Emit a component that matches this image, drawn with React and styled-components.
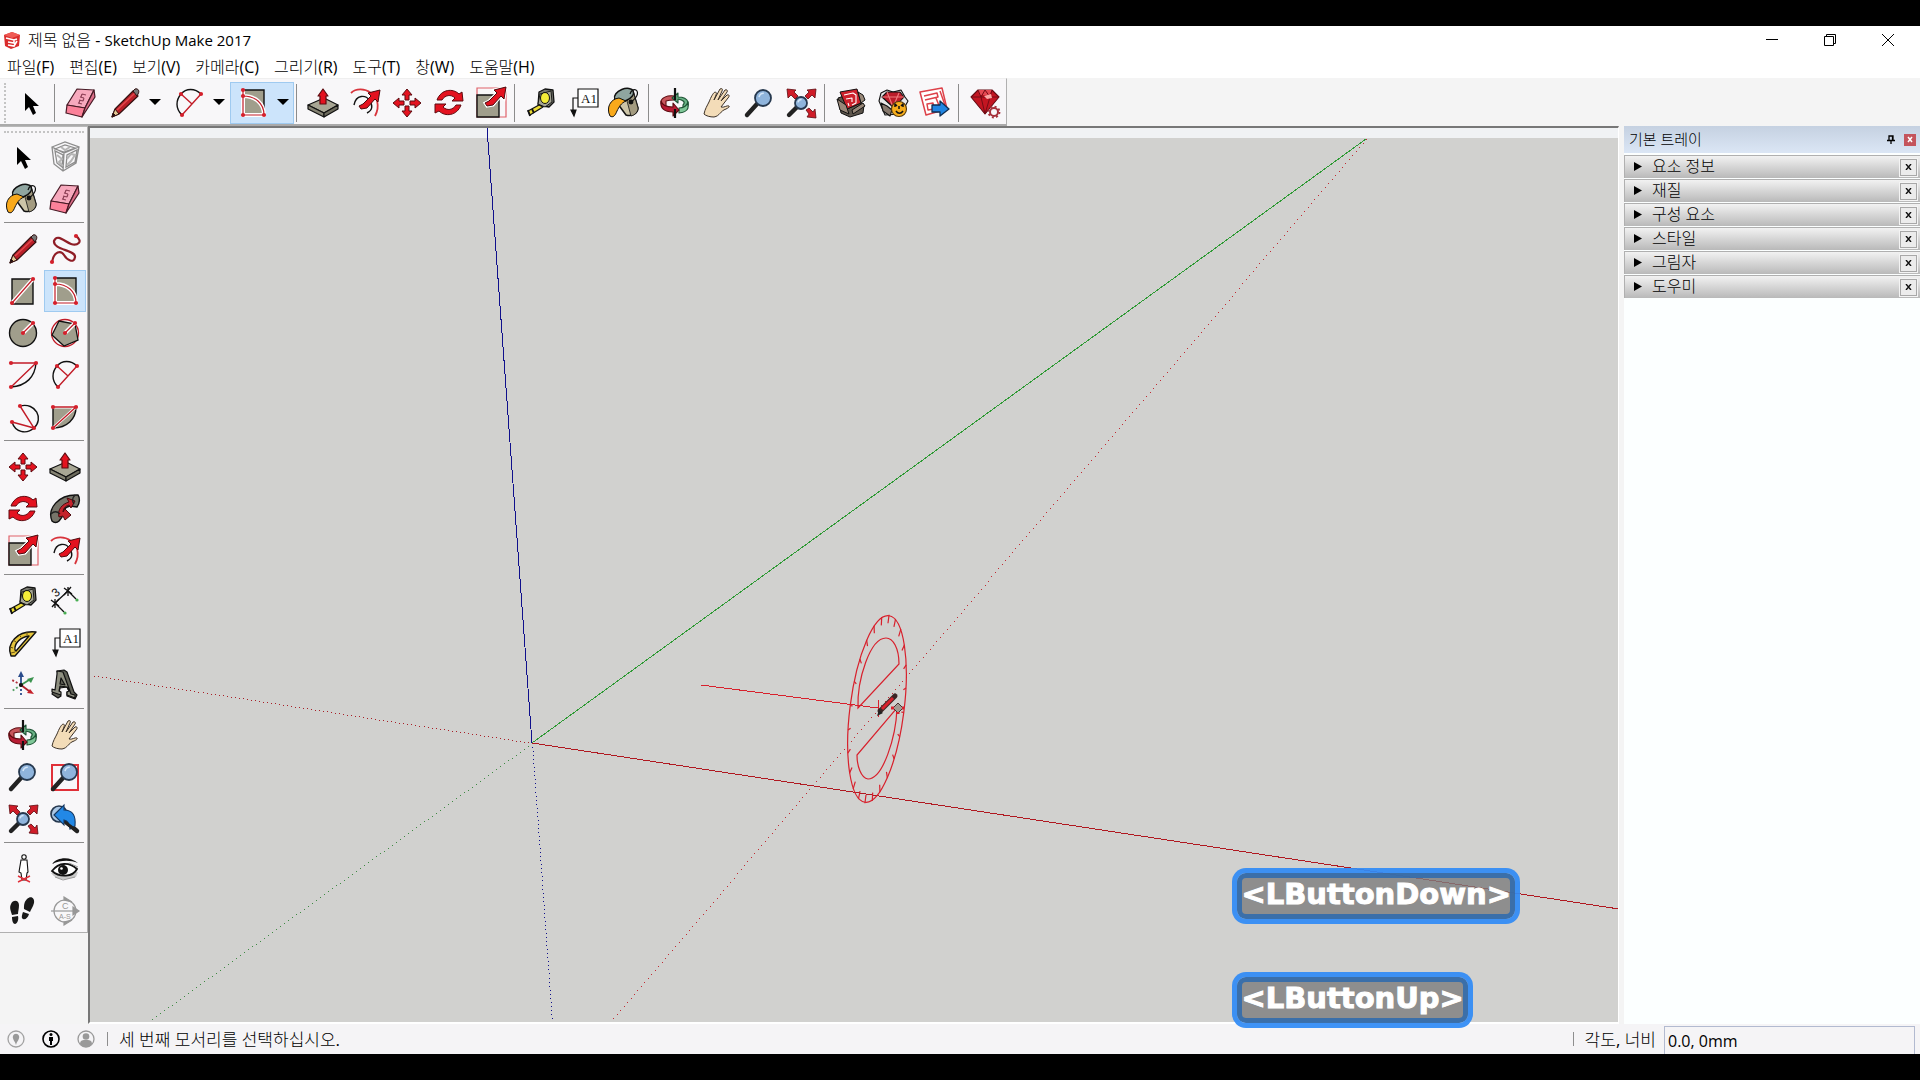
import React, { useState } from "react";
import styled, { createGlobalStyle } from "styled-components";

const GlobalStyle = createGlobalStyle`
  * {
    box-sizing: border-box;
  }

  body {
    margin: 0;
    background: #000;
  }
`;

const Screen = styled.div`
  display: flex;
  flex-direction: column;
  min-height: 100vh;
  padding: 26px 0;
  background: #000;
  color: #000;
  font-family: "Open Sans", "Noto Sans CJK KR Light", "Noto Sans CJK KR DemiLight", "Noto Sans CJK KR", sans-serif;
  font-size: 16px;

  button {
    border: 0;
    padding: 0;
    background: none;
    color: inherit;
    font: inherit;
  }
`;

const Window = styled.main`
  flex: 1;
  display: flex;
  flex-direction: column;
  background: #f4f4f4;
`;

const TitleBar = styled.header`
  display: flex;
  align-items: center;
  height: 28px;
  padding: 0 3px;
  background: #fff;

  h1 {
    flex: 1;
    margin: 0 0 0 7px;
    font-size: 16px;
    font-weight: 400;
    line-height: 28px;
  }

  h1 span {
    font-size: 15px;
  }
`;

const WindowButton = styled.button`
  width: 58px;
  height: 28px;

  svg {
    display: block;
    margin: auto;
  }
`;

const MenuBar = styled.nav`
  display: flex;
  gap: 1px;
  height: 24px;
  background: #fff;

  && button {
    padding: 2px 7px 0;
    font-size: 16px;
    line-height: 22px;
    white-space: nowrap;
  }
`;

const TopBar = styled.div`
  display: flex;
  height: 48px;
`;

const TopTools = styled.div`
  display: flex;
  align-items: center;
  padding: 2px 0 0 4px;
  background: #f8f7f9;
  border-top: 1px solid #efefef;
  border-right: 1px solid #b0b0b0;
  border-bottom: 2px solid #aaa;
`;

const Grip = styled.div`
  ${(p) =>
    p.$row
      ? "height: 5px; margin: 0 2px; border-top: 2px dotted #c4c4c4;"
      : "width: 6px; height: 40px; border-left: 2px dotted #c4c4c4;"}
`;

const Tool = styled.button`
  display: flex;
  align-items: center;
  justify-content: center;
  width: 42px;
  height: 42px;

  && {
    background: ${(p) => (p.$active ? "#cce4fb" : "none")};
    box-shadow: ${(p) => (p.$active ? "inset 0 0 0 1px #9fcaf0" : "none")};
  }
`;

const Split = styled.div`
  display: flex;
  height: 42px;
  background: ${(p) => (p.$active ? "#cce4fb" : "none")};
  box-shadow: ${(p) => (p.$active ? "inset 0 0 0 1px #9fcaf0" : "none")};

  ${Tool} {
    padding-left: 3px;
  }
`;

const Caret = styled.button`
  display: flex;
  align-items: center;
  justify-content: center;
  width: 22px;
  height: 40px;
`;

const Separator = styled.div`
  ${(p) =>
    p.$row
      ? "height: 1px; margin: 2px 0 5px 2px; width: 80px;"
      : "width: 1px; height: 38px; margin: 0 5px 0 2px;"}
  background: #8c8c8c;
`;

const Body = styled.div`
  flex: 1;
  display: flex;
`;

const SideBar = styled.aside`
  flex: none;
  width: 88px;
`;

const SideTools = styled.div`
  padding: 4px 1px 0 2px;
  background: #f8f7f9;
  border-top: 1px solid #b8b8b8;
  border-right: 1px solid #b0b0b0;
  border-bottom: 1px solid #b0b0b0;
`;

const ToolGrid = styled.div`
  display: grid;
  grid-template-columns: 42px 42px;
`;

const Viewport = styled.section`
  flex: 1;
  position: relative;
  min-width: 0;
  background: #d1d1cf;
  border-top: 2px solid #777;
  border-left: 2px solid #777;
  border-right: 1px solid #fff;
  border-bottom: 2px solid #fff;

  > svg {
    position: absolute;
    inset: 0;
    display: block;
    width: 100%;
    height: 100%;
  }
`;

const KeyOverlay = styled.div`
  position: absolute;
  right: 98px;
  bottom: -6px;
  display: flex;
  flex-direction: column;
  align-items: flex-start;
  gap: 48px;
`;

const KeyBadge = styled.kbd`
  height: 56px;
  padding: 0 4px;
  border: 5px solid rgba(48, 139, 245, 0.93);
  border-radius: 14px;
  background: rgba(125, 125, 125, 0.8);
  background-clip: padding-box;
  box-shadow: inset 0 0 0 5px rgba(50, 108, 172, 0.9);
  color: #fff;
  font-family: "DejaVu Sans", sans-serif;
  font-size: 29px;
  font-weight: 700;
  line-height: 43px;
  -webkit-text-stroke: 1px #fff;
`;

const Tray = styled.aside`
  flex: none;
  width: 296px;
  margin-left: 5px;
  background: #fcffff;
`;

const TrayHeader = styled.div`
  display: flex;
  align-items: center;
  height: 27px;
  margin-bottom: 2px;
  padding: 0 4px 0 5px;
  background: linear-gradient(#c5d1e1, #dbe6f5);

  h2 {
    flex: 1;
    margin: 0;
    padding-bottom: 2px;
    font-size: 15px;
    font-weight: 400;
    line-height: 24px;
  }
`;

const PinButton = styled.button`
  width: 18px;
  height: 18px;
  margin-right: 4px;

  svg {
    display: block;
    margin: auto;
  }
`;

const TrayClose = styled.button`
  width: 12px;
  height: 12px;

  svg {
    display: block;
  }
`;

const Panel = styled.div`
  display: flex;
  align-items: center;
  height: 23px;
  margin-bottom: 1px;
  padding-right: 3px;
  border-top: 1px solid #b0b0b0;
  border-left: 1px solid #b0b0b0;
  background: linear-gradient(#f2f2f2, #b9b9b9);
`;

const PanelTitle = styled.button`
  flex: 1;
  display: flex;
  align-items: center;
  gap: 10px;
  height: 22px;

  && {
    padding: 0 0 2px 9px;
    font-size: 16px;
    line-height: 20px;
  }
`;

const PanelClose = styled.button`
  display: flex;
  align-items: center;
  justify-content: center;
  width: 17px;
  height: 17px;

  && {
    border: 1px solid #a8a8a8;
    background: #ececec;
    outline: 1px solid #f4f4f4;
  }
`;

const StatusBar = styled.footer`
  display: flex;
  align-items: center;
  height: 30px;
  padding: 0 5px 0 7px;
  background: #f5f4f6;
  font-size: 17px;
  overflow: hidden;

  p {
    flex: 1;
    margin: 0;
    line-height: 28px;
    padding-top: 2px;
  }

  label {
    line-height: 28px;
    padding-top: 2px;
  }
`;

const StatusButton = styled.button`
  width: 18px;
  height: 18px;
  margin-right: 17px;

  svg {
    display: block;
  }
`;

const StatusRule = styled.div`
  width: 1px;
  height: 14px;
  margin: 0 11px 0 ${(p) => (p.$tight ? "0" : "-5px")};
  background: #8e8e8e;
`;

const ValueBox = styled.input`
  width: 251px;
  height: 28px;
  margin: 2px 0 0 8px;
  padding: 0 3px;
  border: 1px solid #b2bad0;
  border-bottom: 0;
  background: #f5f4f6;
  color: #000;
  font: inherit;
  font-size: 16px;
`;

const RED = "#e4121f";
const DARK = "#111";
const STONE = "#a09e8c";

const Dots = ({ at }) =>
  at.map(([x, y]) => (
    <circle key={x + "-" + y} cx={x} cy={y} r="2.1" fill="#d4202c" />
  ));

const Lens = ({ x = 20, y = 11, r = 8 }) => (
  <>
    <path d={`M${x - r * 0.7} ${y + r * 0.7}L4 28`} stroke="#222" strokeWidth="4.4" strokeLinecap="round" />
    <circle cx={x} cy={y} r={r} fill="#8fb4dc" stroke="#26384e" strokeWidth="1.8" />
    <path d={`M${x - r * 0.5} ${y - r * 0.1}a${r * 0.6} ${r * 0.6} 0 0 1 ${r * 0.6}-${r * 0.5}`} stroke="#d4e6f8" strokeWidth="1.5" fill="none" />
  </>
);

const BigArrow = () => (
  <path d="M14 14l8-8-3-3 12-3-2 12-3-3-8 9-6 1-2-3z" fill={RED} stroke="#4b0a0e" />
);

const icons = {
  select: <path d="M10 6v18l4-4 4 8 3-2-3-7h6z" fill="#000" />,
  component: (
    <g fill="none" stroke="#8d8d8d" strokeWidth="1.3">
      <path d="M3 6l13-5 14 5-3 16-13 8-9-7zM3 6l12 6 15-6M15 12l-1 18M6 8l10-4 10 3-11 4zM6 10l2 12 5 4 1-12zM28 9l-2 12-9 5 1-12z" />
      <path d="M8 14l5 4-3 3 4 4M18 18l4-5 4 1-4 6-4 4M12 6l4 3 5-3" stroke="#b5b5b5" strokeWidth="2" />
    </g>
  ),
  bucket: (
    <g stroke={DARK} strokeWidth="1.5" strokeLinejoin="round">
      <path d="M6 11C8 3 19 0 24 4l5 17c0 5-6 9-12 7L6 13z" fill="#cdc5a8" />
      <path d="M24 4l5 17c0 4-3 7-7 8l-4-15z" fill="#a39b80" strokeWidth=".8" />
      <ellipse cx="15" cy="8" rx="10" ry="6" transform="rotate(-22 15 8)" fill="#8fa5a0" />
      <path d="M1 29c-4-8 0-17 9-18l7 3c-5 2-7 6-9 10-2 5-4 7-7 5z" fill="#f9a91b" strokeWidth="1" />
      <path d="M20 16c5-2 10-8 8-12-2-3-6-1-7 3" fill="none" strokeWidth="1.2" />
      <circle cx="22" cy="15" r="1.7" fill="#111" />
    </g>
  ),
  eraser: (
    <g stroke="#461a25" strokeWidth="1.2" strokeLinejoin="round">
      <path d="M12 2l17 1-9 18-18-3z" fill="#f7a9bd" />
      <path d="M2 18l18 3-3 9-16-4z" fill="#fb8199" />
      <path d="M29 3l1 7-13 20 3-9z" fill="#db6e88" />
      <path d="M13 16l4 1M14 13l4 1M15 10l4 1M17 7l4 1M14 16l1-3M18 14l1-3M16 10l1-3" stroke="#8d4056" />
    </g>
  ),
  pencil: (
    <g stroke="#311" strokeLinejoin="round">
      <path d="M3 30l3-8L24 4l5 5-19 18z" fill="#b81f28" strokeWidth="1.2" />
      <path d="M8 23L26 6" stroke="#e2484c" strokeWidth="1.5" />
      <path d="M24 4l2-2c3-1 5 2 3 5l-1 2z" fill="#777" />
      <path d="M3 30l3-8 4 5z" fill="#e4c894" />
      <path d="M3 30l1-4 2 2z" fill="#111" />
    </g>
  ),
  freehand: (
    <>
      <path d="M3 29c2-11 9-12 12-7s10 9 11 2S4 17 5 8C8 0 16 9 22 11s13-2 5-8" fill="none" stroke="#8f1d26" strokeWidth="2.2" />
      <Dots at={[[3, 29], [27, 3]]} />
    </>
  ),
  line: (
    <>
      <path d="M5 4h21v25H5z" fill={STONE} stroke={DARK} strokeWidth="1.4" />
      <path d="M5 28L26 4" stroke="#fff" strokeWidth="4" />
      <path d="M5 28L26 4" stroke="#c21c28" strokeWidth="1.2" />
      <Dots at={[[5, 28], [26, 4]]} />
    </>
  ),
  rotated: (
    <>
      <path d="M6 3h21v25H6z" fill={STONE} stroke={DARK} strokeWidth="1.4" />
      <g fill="none">
        <path d="M6 3v25h21c0-12-9-19-21-19" stroke="#fff" strokeWidth="4" />
        <path d="M6 3v25h21c0-12-9-19-21-19" stroke="#c21c28" strokeWidth="1.2" />
      </g>
      <Dots at={[[6, 3], [6, 9], [6, 28], [27, 28]]} />
    </>
  ),
  circle: (
    <>
      <circle cx="16" cy="16" r="13.5" fill={STONE} stroke={DARK} strokeWidth="1.4" />
      <path d="M16 16l10-10" stroke="#fff" strokeWidth="4" />
      <path d="M16 16l10-10" stroke="#c21c28" strokeWidth="1.2" />
      <Dots at={[[16, 16], [26, 6]]} />
    </>
  ),
  polygon: (
    <>
      <circle cx="16" cy="16" r="13.5" fill="none" stroke="#c21c28" strokeWidth="1.3" />
      <path d="M10 4l16 3 3 16-14 6L3 18z" fill={STONE} stroke={DARK} strokeWidth="1.3" />
      <path d="M16 16l10-10" stroke="#fff" strokeWidth="4" />
      <path d="M16 16l10-10" stroke="#c21c28" strokeWidth="1.2" />
      <Dots at={[[16, 16], [26, 6]]} />
    </>
  ),
  arc: (
    <g fill="none" strokeWidth="1.4">
      <path d="M29 4c-1 14-10 23-25 24" stroke={DARK} />
      <path d="M29 4H4M29 4L4 28" stroke="#c21c28" />
      <Dots at={[[4, 4], [29, 4], [4, 28]]} />
    </g>
  ),
  arc2: (
    <g fill="none" strokeWidth="1.4">
      <path d="M28 7C22 1 13 1 8 7s-6 14 1 21" stroke={DARK} />
      <path d="M28 7L9 28M8 7l11 10" stroke="#c21c28" />
      <Dots at={[[8, 7], [28, 7], [9, 28]]} />
    </g>
  ),
  arc3: (
    <g fill="none" strokeWidth="1.4">
      <path d="M13 5C29 1 37 18 27 27 19 34 8 31 5 21" stroke={DARK} />
      <path d="M13 5l14 22L5 21" stroke="#c21c28" />
      <Dots at={[[13, 5], [5, 21], [27, 27]]} />
    </g>
  ),
  pie: (
    <g strokeWidth="1.4">
      <path d="M4 6h23c0 12-9 21-23 21z" fill={STONE} stroke={DARK} />
      <path d="M4 6h23L4 27" fill="none" stroke="#fff" strokeWidth="3" />
      <path d="M4 6h23L4 27" fill="none" stroke="#c21c28" />
      <Dots at={[[4, 6], [27, 6], [4, 27]]} />
    </g>
  ),
  move: (
    <path
      d="M16 2l5 6h-3v5h-4V8h-3zM16 30l5-6h-3v-5h-4v5h-3zM2 16l6-5v3h5v4H8v3zM30 16l-6-5v3h-5v4h5v3z"
      fill={RED}
      stroke="#5d0b10"
      strokeWidth="1"
    />
  ),
  pushpull: (
    <g stroke={DARK} strokeWidth="1.2" strokeLinejoin="round">
      <path d="M1 18l16-7 14 7-14 8z" fill="#a8a694" />
      <path d="M1 18l16 8v4L1 22z" fill="#858373" />
      <path d="M31 18l-14 8v4l14-8z" fill="#6d6b5d" />
      <path d="M16 2l5 7h-2v8h-6V9h-2z" fill={RED} stroke="#5d0b10" />
    </g>
  ),
  rotate: (
    <g fill={RED} stroke="#5d0b10" strokeWidth="1" strokeLinejoin="round">
      <path d="M4 13C8 2 20 1 26 7l3-2 1 9H19l3-3c-4-4-10-3-13 2z" />
      <path d="M28 18c-4 11-16 12-22 6l-4 2 0-9h11l-3 3c4 4 10 3 13-2z" />
    </g>
  ),
  follow: (
    <g stroke={DARK} strokeWidth="1.4" strokeLinejoin="round">
      <path d="M3 28C-2 16 9 1 29 2c2 3 2 8-1 12l-7-1c-5 1-8 5-8 11l-3 4c-2 2-5 2-7 0z" fill="#77756a" />
      <path d="M10 24c-2-7 3-13 10-15l-2-4 8 3-4 7-2-3c-4 1-6 4-6 7l2-3 6 6-6 5-2-4z" fill="#c5222b" stroke="#4b0a0e" strokeWidth="1" />
      <path d="M26 2c-3 3-3 6-1 9M2 21c3-3 6-3 9 0" fill="none" stroke="#222" />
    </g>
  ),
  scale: (
    <>
      <path d="M2 1h29v29H2z" fill="none" stroke="#e0626a" strokeWidth="1.2" />
      <path d="M2 8h22v22H2z" fill={STONE} stroke={DARK} strokeWidth="1.4" />
      <path d="M14 14l8-8-3-3 12-3-2 12-3-3-8 9-6 1-2-3z" stroke="#fff" strokeWidth="3" />
      <BigArrow />
    </>
  ),
  offset: (
    <>
      <path d="M2 6C12-4 37 8 26 29" fill="none" stroke="#d8343c" strokeWidth="1.8" />
      <path d="M5 18C7 7 17 8 20 13c4 5 4 10-2 13" fill="none" stroke={DARK} strokeWidth="1.4" />
      <g transform="translate(0 3)">
        <BigArrow />
      </g>
    </>
  ),
  tape: (
    <g stroke={DARK} strokeWidth="1.3" strokeLinejoin="round">
      <path d="M14 5l6-3 8 1 1 12-5 5-11-2z" fill="#77786f" />
      <path d="M13 17l2-10 11-3 1 11-7 5z" fill="#a5a595" strokeWidth=".9" />
      <ellipse cx="20" cy="11" rx="4.5" ry="5.5" fill="#f4ec38" strokeWidth="1" />
      <path d="M14 18L3 24l2 4 13-8z" fill="#ecdc34" />
      <path d="M3 23l2 6M7 22l2 4" strokeWidth="1.8" />
    </g>
  ),
  dimension: (
    <g fill="none" stroke={DARK} strokeWidth="1.3">
      <path d="M6 18L19 6M6 18l9 9M19 6l8 8" />
      <path d="M2 15l8 6M6 14v9M15 3l8 6M19 2v9M3 22l7-8M15 10l7-8" />
      <circle cx="28" cy="15" r="1.6" fill="#48ae52" stroke="none" />
      <circle cx="16" cy="28" r="1.6" fill="#48ae52" stroke="none" />
      <text x="4" y="11" transform="rotate(-40 8 8)" fontFamily="Liberation Sans" fontSize="12" fill={DARK} stroke="none">3</text>
    </g>
  ),
  protractor: (
    <g stroke={DARK} strokeWidth="1.4" strokeLinejoin="round">
      <path d="M4 29C-1 17 10 3 29 5L8 29z" fill="#e5c53c" />
      <path d="M8 23c-1-7 6-13 14-14L9 24z" fill="#f8f7f9" />
      <path d="M3 20l3 1M6 13l3 2M12 8l2 2M20 5v3M4 26l4-1" stroke="#6a5210" strokeWidth="1" />
    </g>
  ),
  text: (
    <g stroke={DARK} strokeWidth="1.2">
      <path d="M11 2h20v18H11z" fill="#fff" />
      <path d="M11 11H6v13" fill="none" />
      <path d="M4 23h5l-2 6z" fill={DARK} />
      <text x="14" y="16" fontFamily="Liberation Serif" fontSize="13" fill={DARK} stroke="none">A1</text>
    </g>
  ),
  axes: (
    <g strokeWidth="1.8">
      <path d="M14 16v12" stroke="#2a4c8c" strokeDasharray="2 2" />
      <path d="M14 16L5 22" stroke="#53a063" strokeDasharray="2 2" />
      <path d="M14 16L5 11" stroke="#b0303a" strokeDasharray="2 2" />
      <path d="M14 16V7" stroke="#2a4c8c" />
      <path d="M14 16l8-5" stroke="#3c9450" />
      <path d="M14 16l8 6" stroke="#b0202a" />
      <path d="M14 2l3 6h-6z" fill="#2a4c8c" />
      <path d="M27 8l-3 6-4-4z" fill="#3c9450" />
      <path d="M27 25l-7-1 3-4z" fill="#c4202a" />
      <circle cx="14" cy="16" r="2" fill={DARK} />
    </g>
  ),
  text3d: (
    <g stroke={DARK} strokeWidth="1.2" strokeLinejoin="round">
      <path d="M8 2l7-1 3 2 7 20 3 3-2 4-8-3v-4l2-1-2-4-7 1-1 5 2 3-3 2-6-4 2-4 3 1 1-17z" fill="#5f6056" />
      <path d="M8 2l6 1 8 22 4 1v3l-8-3v-3l2-1-2-4-7-1-1 5 2 1v3l-9-3v-3l3 1 2-16zM12 9l-1 6 5 1z" fill="#8e8f80" />
    </g>
  ),
  orbit: (
    <g strokeLinejoin="round" strokeWidth="1.1">
      <path d="M15 9C8 8 2 11 2 15c0 3 2 4 5 5v-6c3-1 5-1 8-1z" fill="#c8565c" stroke="#5d0b10" />
      <path d="M19 6l-6 5 6 5v-4c5 1 8 3 5 6v5c4-1 6-4 5-8-1-3-5-5-10-5z" fill="#6ab386" stroke="#1c5233" />
      <path d="M29 15v6c-1 3-5 5-9 5v-5c5 0 8-3 9-6z" fill="#7fc798" stroke="#1c5233" />
      <path d="M2 14c1 4 6 6 12 6v-4l6 7-6 6v-4C5 25 1 21 2 14z" fill="#b81c34" stroke="#5d0b10" />
      <path d="M16 1v12M16 22v9" stroke={DARK} strokeWidth="2.2" />
    </g>
  ),
  pan: (
    <path
      d="M3 27c1-5 3-8 5-12 2-5 4-9 6-10 1 0 2 1 1 3l-2 5 6-11c2-1 3 0 2 2l-4 9 7-10c2-1 3 1 2 2l-6 9 6-6c2-1 3 1 1 3l-7 9c3 1 6-2 8-1 1 1-1 2-3 3-6 2-6 7-12 8-4 0-8-1-10-3z"
      fill="#f3dcb8"
      stroke="#3c3127"
      strokeWidth="1"
    />
  ),
  zoom: <Lens />,
  zoomWindow: (
    <>
      <path d="M3 4h26v25H3z" fill="none" stroke="#e03038" strokeWidth="2" />
      <Lens />
    </>
  ),
  extents: (
    <>
      <Lens x={16} y={16} r={6} />
      <g fill="#cf1c28" stroke="#5d0b10" strokeWidth=".8">
        <path d="M2 2l9 1-2 2 4 4-3 3-4-4-3 3zM31 2l-9 1 2 2-4 4 3 3 4-4 3 3zM31 31l-9-1 2-3-3-4 3-2 4 4 2-3z" />
      </g>
    </>
  ),
  previous: (
    <>
      <circle cx="10" cy="11" r="8" fill="#a9c6e4" stroke="#26384e" strokeWidth="1.7" />
      <path d="M16 18l12 10" stroke="#222" strokeWidth="4.4" strokeLinecap="round" />
      <path d="M5 12L15 2v5c9 0 12 6 11 16l-5 3c-1-6-2-8-6-9v5z" fill="#2288e6" stroke="#14365f" strokeWidth="1.1" />
      <path d="M17 20l11 8" stroke="#222" strokeWidth="3" strokeLinecap="round" />
    </>
  ),
  camera: (
    <g fill="#fff" stroke={DARK} strokeWidth="1.1">
      <circle cx="17" cy="4" r="2.2" />
      <path d="M14 7h6l1 12-1 1-1 7h-4l-1-7-2-1z" />
      <path d="M11 23l12 6M23 23l-12 6" stroke="#e0303a" strokeWidth="1.4" />
    </g>
  ),
  look: (
    <g>
      <path d="M2 20c6 8 16 7 25 4l2-5z" fill="#c9c9c9" />
      <path d="M3 18c7-9 17-9 25-2-4 8-17 9-25 2z" fill="#fff" stroke={DARK} strokeWidth="1.8" />
      <path d="M3 11c5-7 18-8 26-1-8-3-17-3-26 1z" fill={DARK} />
      <circle cx="14" cy="17" r="5" fill={DARK} />
      <circle cx="12.5" cy="15.5" r="1.3" fill="#fff" />
      <path d="M6 24l8 3 12-3M20 10l9 4" fill="none" stroke="#999" />
    </g>
  ),
  walk: (
    <g fill="#191919">
      <path d="M4 9c2-5 8-4 8 1 0 4-1 6-1 9l-6 1c-1-4-3-7-1-11zM5 22l6-1c1 4-1 8-3 8s-3-3-3-7z" />
      <path d="M20 4c4-4 8-1 7 4-1 4-3 6-4 9l-6-3c0-4 0-7 3-10zM16 17l6 2c-1 4-4 6-6 5s-1-4 0-7z" />
    </g>
  ),
  section: (
    <g fill="none" stroke="#989898" strokeWidth="1.2">
      <circle cx="16" cy="16" r="11" />
      <path d="M2 16h25" />
      <path d="M15 2l8 5-8-2zM15 30l8-5-8 2zM24 12l6 4-6 4z" fill="#989898" />
      <g fill="#989898" stroke="none" fontFamily="Liberation Sans" fontSize="9">
        <text x="13" y="14">C</text>
        <text x="10" y="24" fontSize="7">A-S</text>
      </g>
    </g>
  ),
  warehouse: (
    <g stroke={DARK} strokeWidth="1" strokeLinejoin="round">
      <path d="M3 11l6-2 3 13 14-6 3 2-1 8-13 4-9-4z" fill="#5d554c" />
      <path d="M5 5l17-3 4 14-14 6z" fill="#cd202b" />
      <path d="M2 12l3 11 9 4-3-9zM23 5l5 3 2 5-4 3zM28 16l2 3-12 8-1-4z" fill="#988778" />
      <path d="M9 8l9-2 3 2v8l-4 2M11 12l6-1v4M13 16l1 3" fill="none" stroke="#fff" strokeWidth="1.1" />
    </g>
  ),
  extension: (
    <g stroke={DARK} strokeWidth="1.1" strokeLinejoin="round">
      <path d="M2 14l2-8 6-3 6 2 8-2 4 7 3 4-7 13-16 1z" fill="#e8e8e8" />
      <path d="M4 16l6 3 5 4-2 6-7-5z" fill="#86786d" />
      <path d="M5 10l5-5h13l4 5-10 11z" fill="#bb1c29" />
      <path d="M5 10h22M10 5l6 15 6-14" fill="none" stroke="#f07a7c" />
      <circle cx="22" cy="22" r="7.5" fill="#f7ad1b" stroke="#54390a" />
      <path d="M18 20v-3l2 2M26 20v-3l-2 2M19 24c2 3 5 3 7 0M22 19v3" fill="none" strokeWidth="1.5" />
    </g>
  ),
  layout: (
    <g strokeLinejoin="round">
      <path d="M1 5l22-4 5 21-21 6z" fill="#fff" stroke="#dd4149" strokeWidth="1.5" />
      <path d="M5 9l13-3 1 4-13 3M8 17l6-1 1 6-6 1zM17 11l4 10M21 4l5 14" fill="none" stroke="#dd4149" strokeWidth="1.5" />
      <path d="M13 18h8v-4l9 8-9 7v-4h-8z" fill="#2085e2" stroke="#102e52" strokeWidth="1.3" />
    </g>
  ),
  ruby: (
    <g strokeLinejoin="round">
      <path d="M2 10l7-7h14l7 7-14 17z" fill="#c31521" stroke="#630a12" strokeWidth="1.1" />
      <path d="M9 3h14l-3 5H11z" fill="#e64951" />
      <path d="M2 10h28M9 3l3 7 4 17 5-17 2-7M12 10l4-7 5 7" fill="none" stroke="#740c15" />
      <path d="M15 9l7-2 1 4-5 1z" fill="#fba9a5" />
      <circle cx="25" cy="25" r="4" fill="#f8f7f9" stroke="#a5303a" strokeWidth="2" />
      <circle cx="25" cy="25" r="5.5" fill="none" stroke="#a5303a" strokeWidth="1.8" strokeDasharray="2 2.3" />
    </g>
  ),
};

const Icon = ({ name }) => (
  <svg width="32" height="32" viewBox="0 0 32 32" overflow="visible" aria-hidden="true">
    {icons[name]}
  </svg>
);

const topGroups = [
  ["pushpull", "offset", "move", "rotate", "scale"],
  ["tape", "text", "bucket"],
  ["orbit", "pan", "zoom", "extents"],
  ["warehouse", "extension", "layout"],
  ["ruby"],
];

const sideGroups = [
  ["select", "component", "bucket", "eraser"],
  ["pencil", "freehand", "line", "rotated", "circle", "polygon", "arc", "arc2", "arc3", "pie"],
  ["move", "pushpull", "rotate", "follow", "scale", "offset"],
  ["tape", "dimension", "protractor", "text", "axes", "text3d"],
  ["orbit", "pan", "zoom", "zoomWindow", "extents", "previous"],
  ["camera", "look", "walk", "section"],
];

const menus = ["파일(F)", "편집(E)", "보기(V)", "카메라(C)", "그리기(R)", "도구(T)", "창(W)", "도움말(H)"];
const panels = ["요소 정보", "재질", "구성 요소", "스타일", "그림자", "도우미"];

const tilt = (7.3 * Math.PI) / 180;
const ticks = Array.from({ length: 24 }, (_, i) => {
  const t = (i * Math.PI) / 12;
  const dx = 27 * Math.cos(t) * Math.cos(tilt) + 95 * Math.sin(t) * Math.sin(tilt);
  const dy = 27 * Math.cos(t) * Math.sin(tilt) - 95 * Math.sin(t) * Math.cos(tilt);
  return `M${877 + dx} ${709 + dy}L${877 + dx * 0.91} ${709 + dy * 0.91}`;
}).join("");

// one whole pixel every four along the longer side of the line
const dotted = (x1, y1, x2, y2) => {
  const count = Math.floor(Math.max(Math.abs(x2 - x1), Math.abs(y2 - y1)) / 4);
  return Array.from({ length: count }, (_, i) => {
    const x = Math.round(x1 + ((x2 - x1) * i) / count);
    const y = Math.round(y1 + ((y2 - y1) * i) / count);
    return `M${x} ${y}h1v1h-1z`;
  }).join("");
};

function Scene() {
  return (
    <svg viewBox="90 128 1528 894" preserveAspectRatio="xMinYMin slice" aria-label="모델">
      <path d="M90 128h1528v10H90z" fill="#f0f2f4" />
      <g shapeRendering="crispEdges">
        <path d={dotted(532, 743, 148, 1022)} fill="#3f8a44" />
        <path d={dotted(532, 743, 552, 1022)} fill="#10108c" />
        <path d={dotted(532, 743, 90, 675)} fill="#a82028" />
        <path d={dotted(1366, 139, 610, 1022)} fill="#c02c34" />
      </g>
      <g fill="none" shapeRendering="crispEdges">
        <path d="M532 743L1366 139" stroke="#2f9a35" />
        <path d="M532 743L487 128" stroke="#10108c" />
        <path d="M532 743l1087 166" stroke="#b01820" />
        <path d="M701 685l177 23M878 700v17" stroke="#d8202c" />
      </g>
      <g fill="none" stroke="#d8202c" strokeWidth="1.2">
        <ellipse cx="877" cy="709" rx="27" ry="94" transform="rotate(7.3 877 709)" />
        <path d={ticks} />
        <path d="M858 708c-1-28 12-70 28-70 7 0 13 10 13 26l-41 44z" />
        <path d="M857 755c0 11 4 23 11 24 15 0 28-42 29-71-1 0 0 1-1 1z" />
      </g>
      <path d="M880 711l15-15" stroke="#3b2424" strokeWidth="5" strokeLinecap="round" />
      <path d="M882 709l11-11" stroke="#d8202c" strokeWidth="3" />
      <path d="M877 716l2-6 4 3z" fill="#222" />
      <path d="M898 703l5 5-5 5-5-5z" fill="#a29a92" stroke="#4a3030" />
      <path d="M894 708h-3M902 708h2M898 712v2" stroke="#d8202c" strokeWidth="3" />
    </svg>
  );
}

const Triangle = () => (
  <svg width="12" height="6" viewBox="0 0 12 6">
    <path d="M0 0h12L6 6z" fill="#000" />
  </svg>
);

function App() {
  const [tool, setTool] = useState("rotated");
  const [measure, setMeasure] = useState("0.0, 0mm");

  return (
    <Screen>
      <GlobalStyle />
      <Window>
        <TitleBar>
          <svg width="18" height="18" viewBox="0 0 18 18">
            <path d="M1 4l8-3 8 3-1 11-8 3-6-3z" fill="#d92c2c" />
            <path d="M1 4l8 3 8-3-8-3z" fill="#ef5a54" />
            <path d="M3 7l8 2 3-1M11 9v3l-6-1M5 14l6 1 3-5" fill="none" stroke="#fff" strokeWidth="1.6" />
          </svg>
          <h1>
            제목 없음 - <span>SketchUp Make 2017</span>
          </h1>
          <WindowButton aria-label="최소화">
            <svg width="12" height="12" viewBox="0 0 12 12"><path d="M0 5.5h12" stroke="#000" /></svg>
          </WindowButton>
          <WindowButton aria-label="이전 크기로 복원">
            <svg width="12" height="12" viewBox="0 0 12 12">
              <path d="M.5 2.5h9v9h-9zM2.5 2.5v-2h9v9h-2" fill="none" stroke="#000" />
            </svg>
          </WindowButton>
          <WindowButton aria-label="닫기">
            <svg width="12" height="12" viewBox="0 0 12 12"><path d="M0 0l12 12M12 0L0 12" stroke="#000" /></svg>
          </WindowButton>
        </TitleBar>

        <MenuBar>
          {menus.map((menu) => (
            <button key={menu}>{menu}</button>
          ))}
        </MenuBar>

        <TopBar>
          <TopTools>
            <Grip />
            <Tool aria-label="select" onClick={() => setTool("select")}>
              <Icon name="select" />
            </Tool>
            <Separator />
            <Tool aria-label="eraser" onClick={() => setTool("eraser")}>
              <Icon name="eraser" />
            </Tool>
            {["pencil", "arc2", "rotated"].map((name) => (
              <Split key={name} $active={tool === name}>
                <Tool aria-label={name} onClick={() => setTool(name)}>
                  <Icon name={name} />
                </Tool>
                <Caret aria-label={name + " menu"}>
                  <Triangle />
                </Caret>
              </Split>
            ))}
            {topGroups.map((group) => (
              <React.Fragment key={group[0]}>
                <Separator />
                {group.map((name) => (
                  <Tool key={name} aria-label={name} onClick={() => setTool(name)}>
                    <Icon name={name} />
                  </Tool>
                ))}
              </React.Fragment>
            ))}
          </TopTools>
        </TopBar>

        <Body>
          <SideBar>
            <SideTools>
              <Grip $row />
              {sideGroups.map((group, index) => (
                <React.Fragment key={group[0]}>
                  {index > 0 ? <Separator $row /> : null}
                  <ToolGrid>
                    {group.map((name) => (
                      <Tool key={name} aria-label={name} $active={tool === name} onClick={() => setTool(name)}>
                        <Icon name={name} />
                      </Tool>
                    ))}
                  </ToolGrid>
                </React.Fragment>
              ))}
            </SideTools>
          </SideBar>

          <Viewport>
            <Scene />
            <KeyOverlay>
              <KeyBadge>&lt;LButtonDown&gt;</KeyBadge>
              <KeyBadge>&lt;LButtonUp&gt;</KeyBadge>
            </KeyOverlay>
          </Viewport>

          <Tray>
            <TrayHeader>
              <h2>기본 트레이</h2>
              <PinButton aria-label="고정">
                <svg width="8" height="9" viewBox="0 0 8 9">
                  <path d="M2 5V1h4v4M0 5.5h8M4 6v3M5.5 1v4" fill="none" stroke="#000" strokeWidth="1.3" />
                </svg>
              </PinButton>
              <TrayClose aria-label="트레이 닫기">
                <svg width="12" height="12" viewBox="0 0 12 12">
                  <path d="M0 0h12v12H0z" fill="#c4545c" />
                  <path d="M4 3l4 5M8 3L4 8" stroke="#fff" strokeWidth="1.5" />
                </svg>
              </TrayClose>
            </TrayHeader>
            {panels.map((panel) => (
              <Panel key={panel}>
                <PanelTitle>
                  <svg width="8" height="9" viewBox="0 0 8 9"><path d="M0 0l8 4.5L0 9z" fill="#000" /></svg>
                  {panel}
                </PanelTitle>
                <PanelClose aria-label={panel + " 닫기"}>
                  <svg width="7" height="6" viewBox="0 0 7 6"><path d="M1 0l5 6M6 0L1 6" stroke="#111" strokeWidth="1.4" /></svg>
                </PanelClose>
              </Panel>
            ))}
          </Tray>
        </Body>

        <StatusBar>
          <StatusButton aria-label="위치">
            <svg width="18" height="18" viewBox="0 0 18 18">
              <circle cx="9" cy="9" r="8" fill="none" stroke="#a2a2a2" strokeWidth="1.3" />
              <path d="M9 15C8 11 5 9 6 6c1-3 5-3 6 0 1 3-2 5-3 9z" fill="#999" />
            </svg>
          </StatusButton>
          <StatusButton aria-label="크레딧">
            <svg width="18" height="18" viewBox="0 0 18 18">
              <circle cx="9" cy="9" r="8" fill="none" stroke="#000" strokeWidth="1.6" />
              <circle cx="9" cy="4.5" r="1.5" />
              <path d="M7 7h4v4h-1v4H8v-4H7z" />
            </svg>
          </StatusButton>
          <StatusButton aria-label="로그인">
            <svg width="18" height="18" viewBox="0 0 18 18">
              <circle cx="9" cy="9" r="8" fill="none" stroke="#999" strokeWidth="1.3" />
              <circle cx="9" cy="6.5" r="3.3" fill="#999" />
              <path d="M3 14c0-4 3-4 6-4s6 0 6 4c-3 4-9 4-12 0z" fill="#999" />
            </svg>
          </StatusButton>
          <StatusRule />
          <p>세 번째 모서리를 선택하십시오.</p>
          <StatusRule $tight />
          <label htmlFor="measure">각도, 너비</label>
          <ValueBox id="measure" value={measure} onChange={(e) => setMeasure(e.target.value)} />
        </StatusBar>
      </Window>
    </Screen>
  );
}

export default App;
